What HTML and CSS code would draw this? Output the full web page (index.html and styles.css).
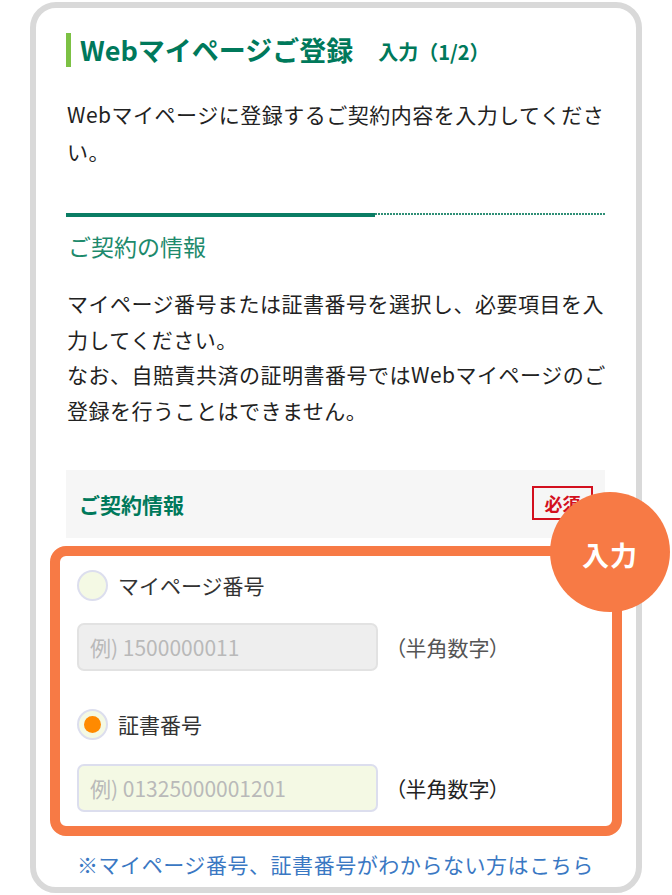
FILE: index.html
```html
<!DOCTYPE html>
<html lang="ja">
<head>
<meta charset="utf-8">
<link rel="stylesheet" href="styles.css">
</head>
<body>
<div class="card">
  <h1 class="title"><span class="title-main">Webマイページご登録</span><span class="title-sub">入力（1/2）</span></h1>
  <p class="lead">Webマイページに登録するご契約内容を入力してください。</p>
  <div class="progress"><div class="progress-done"></div><div class="progress-rest"></div></div>
  <h2 class="section">ご契約の情報</h2>
  <p class="desc">マイページ番号または証書番号を選択し、必要項目を入力してください。<br>なお、自賠責共済の証明書番号ではWebマイページのご登録を行うことはできません。</p>
  <div class="field-head"><span class="field-title">ご契約情報</span><span class="badge">必須</span></div>
  <div class="input-box">
    <div class="bubble">入力</div>
    <div class="radio-row"><span class="radio"></span><span class="radio-label">マイページ番号</span></div>
    <div class="input-row">
      <div class="field field-disabled"><span class="ph">例) 1500000011</span></div>
      <span class="note note-muted"><span class="palt">（</span>半角数字<span class="palt">）</span></span>
    </div>
    <div class="radio-row radio-row-2"><span class="radio radio-on"><span class="dot"></span></span><span class="radio-label">証書番号</span></div>
    <div class="input-row input-row-2">
      <div class="field field-active"><span class="ph">例) 01325000001201</span></div>
      <span class="note"><span class="palt">（</span>半角数字<span class="palt">）</span></span>
    </div>
  </div>
  <a class="help" href="#">※マイページ番号、証書番号がわからない方はこちら</a>
</div>
</body>
</html>
```

FILE: styles.css
```css
html, body {
  margin: 0;
  padding: 0;
  background: #ffffff;
}
body {
  font-family: "Noto Sans CJK JP", "Noto Sans", sans-serif;
  color: #222222;
  width: 672px;
  height: 895px;
  overflow: hidden;
}
.card {
  box-sizing: border-box;
  margin: 2px 0 0 30px;
  width: 612px;
  height: 891px;
  border: 6px solid #d9d9d9;
  border-radius: 26px;
  padding: 25px 31px 0 30px;
  position: relative;
}
.palt {
  font-feature-settings: "palt";
}
.title {
  margin: 0;
  display: flex;
  align-items: center;
  height: 34px;
  border-left: 5px solid #7cc144;
  padding-left: 9px;
  color: #00795b;
  font-weight: 700;
}
.title-main {
  font-size: 27px;
  line-height: 34px;
}
.title-sub {
  font-size: 20px;
  line-height: 34px;
  margin-left: 25px;
  padding-top: 3px;
}
.lead {
  margin: 29px -5px 0 1px;
  font-size: 21px;
  line-height: 37px;
  letter-spacing: 0.5px;
}
.progress {
  margin-top: 43px;
  display: flex;
  align-items: flex-start;
  height: 4px;
}
.progress-done {
  width: 309px;
  height: 4px;
  background: #0a7d64;
}
.progress-rest {
  flex: 1;
  height: 2px;
  background: repeating-linear-gradient(to right, #2f8f76 0 2px, transparent 2px 3px);
}
.section {
  margin: 12px 0 0 2px;
  font-size: 23px;
  font-weight: 400;
  line-height: 34px;
  color: #1d8a6c;
}
.desc {
  margin: 23px -5px 0 1px;
  font-size: 21px;
  line-height: 35.6px;
  letter-spacing: 0.5px;
}
.field-head {
  margin-top: 42px;
  height: 68px;
  background: #f6f6f6;
  display: flex;
  align-items: center;
  justify-content: space-between;
  padding: 0 12px 0 13px;
}
.field-title {
  font-size: 21px;
  font-weight: 700;
  color: #00795b;
}
.badge {
  box-sizing: border-box;
  width: 61px;
  height: 34px;
  border: 2px solid #d3101e;
  color: #d3101e;
  font-size: 18px;
  font-weight: 700;
  display: flex;
  align-items: center;
  justify-content: center;
  margin-top: -2px;
}
.input-box {
  position: relative;
  margin: 8px -17px 0 -16px;
  border: 10px solid #f77a45;
  border-radius: 16px;
  padding: 13px 17px 14px 17px;
}
.bubble {
  position: absolute;
  top: -64px;
  right: -58px;
  width: 120px;
  height: 120px;
  border-radius: 50%;
  background: #f77a45;
  color: #ffffff;
  font-size: 27px;
  font-weight: 700;
  display: flex;
  align-items: center;
  justify-content: center;
  padding-top: 4px;
  box-sizing: border-box;
  letter-spacing: 1px;
}
.radio-row {
  display: flex;
  align-items: center;
  height: 32px;
}
.radio-row-2 {
  margin-top: 37px;
}
.radio {
  box-sizing: border-box;
  width: 31px;
  height: 31px;
  border-radius: 50%;
  border: 2px solid #dcdeee;
  background: #f4f9e4;
  display: flex;
  align-items: center;
  justify-content: center;
}
.dot {
  width: 17px;
  height: 17px;
  border-radius: 50%;
  background: #ff8a00;
}
.radio-label {
  margin-left: 10px;
  font-size: 21px;
  color: #333333;
}
.input-row {
  margin-top: 22px;
  display: flex;
  align-items: center;
}
.input-row-2 {
  margin-top: 24px;
}
.field {
  box-sizing: border-box;
  width: 301px;
  height: 48px;
  border-radius: 7px;
  border: 2px solid #e0e0e0;
  display: flex;
  align-items: center;
  padding-left: 11px;
}
.field-disabled {
  background: #eeeeee;
  border-color: #e2e2e2;
}
.field-active {
  background: #f4f9e4;
  border-color: #dcdeee;
}
.ph {
  font-size: 21px;
  color: #b9b9b9;
}
.note {
  margin-left: 17px;
  font-size: 21px;
  color: #222222;
}
.note-muted {
  color: #555555;
}
.help {
  display: block;
  margin: 10px 0 0 11px;
  font-size: 21px;
  line-height: 36px;
  letter-spacing: 0.55px;
  color: #3a78c3;
  text-decoration: none;
  white-space: nowrap;
}
```
